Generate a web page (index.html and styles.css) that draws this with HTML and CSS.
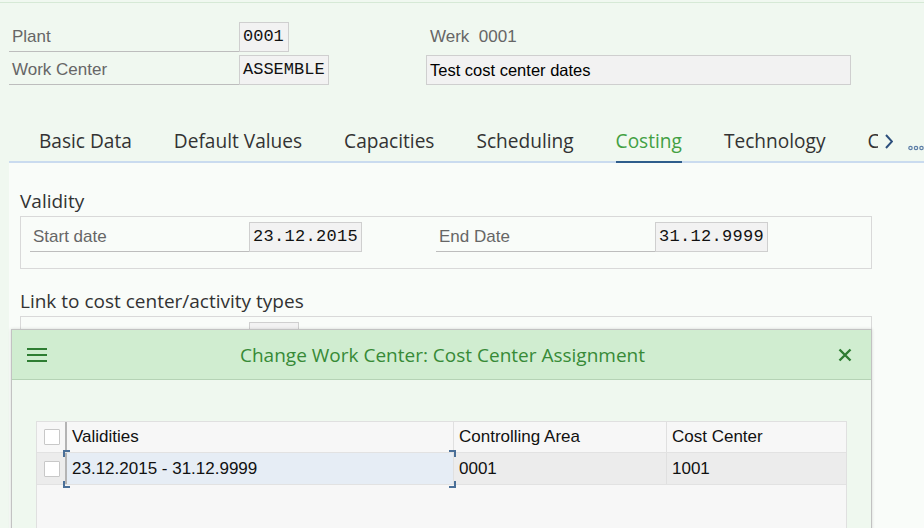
FILE: index.html
```html
<!DOCTYPE html>
<html lang="en">
  <head>
    <meta charset="UTF-8" />
    <title>Change Work Center: Costing</title>
    <link rel="stylesheet" href="styles.css">
  </head>
  <body>
    <div class="page">
      <!-- header fields -->
      <div class="head-grid">
        <div class="lbl">Plant</div>
        <div class="cell"><span class="box mono w-short">0001</span></div>
        <div class="werk">Werk&nbsp;&nbsp;0001</div>

        <div class="lbl">Work Center</div>
        <div class="cell"><span class="box mono">ASSEMBLE</span></div>
        <div class="box desc">Test cost center dates</div>
      </div>

      <!-- tab strip -->
      <div class="tabbar">
        <div class="tabs">
          <span class="tab">Basic Data</span>
          <span class="tab">Default Values</span>
          <span class="tab">Capacities</span>
          <span class="tab">Scheduling</span>
          <span class="tab active">Costing</span>
          <span class="tab">Technology</span>
          <span class="tab">Co</span>
        </div>
        <svg class="tab-arrow" width="8" height="15" viewBox="0 0 8 15">
          <path d="M1 1 L7 7.5 L1 14" fill="none" stroke="#2c4f7c" stroke-width="2" />
        </svg>
        <svg class="tab-more" width="16" height="6" viewBox="0 0 16 6">
          <circle cx="2.5" cy="3" r="1.7" fill="none" stroke="#5d7fa8" stroke-width="1.2" />
          <circle cx="8" cy="3" r="1.7" fill="none" stroke="#5d7fa8" stroke-width="1.2" />
          <circle cx="13.5" cy="3" r="1.7" fill="none" stroke="#5d7fa8" stroke-width="1.2" />
        </svg>
      </div>

      <!-- tab content -->
      <div class="content">
        <h3 class="sec-title">Validity</h3>
        <div class="fbox">
          <div class="frow">
            <div class="flabel">Start date</div>
            <span class="box mono date">23.12.2015</span>
            <div class="flabel gap">End Date</div>
            <span class="box mono date">31.12.9999</span>
          </div>
        </div>

        <h3 class="sec-title second">Link to cost center/activity types</h3>
        <div class="fbox">
          <div class="frow">
            <div class="flabel"></div>
            <span class="box mono w-short"></span>
          </div>
        </div>
      </div>
    </div>

    <!-- popup dialog -->
    <div class="dialog">
      <div class="dlg-head">
        <svg width="20" height="14" viewBox="0 0 20 14">
          <path d="M0 1 H20 M0 7 H20 M0 13 H20" stroke="#2e7d32" stroke-width="2.2" />
        </svg>
        <div class="dlg-title">Change Work Center: Cost Center Assignment</div>
        <svg width="14" height="14" viewBox="0 0 14 14">
          <path d="M1.5 1.5 L12.5 12.5 M12.5 1.5 L1.5 12.5" stroke="#2e7d32" stroke-width="2.4" />
        </svg>
      </div>
      <div class="dlg-body">
        <div class="grid">
          <div class="grow ghead">
            <div class="gcell chk"><span class="checkbox"></span></div>
            <div class="gcell">Validities</div>
            <div class="gcell">Controlling Area</div>
            <div class="gcell last">Cost Center</div>
          </div>
          <div class="grow gdata">
            <div class="gcell chk"><span class="checkbox"></span></div>
            <div class="gcell selected">23.12.2015 - 31.12.9999<span class="sel-frame"></span></div>
            <div class="gcell">0001</div>
            <div class="gcell last">1001</div>
          </div>
        </div>
      </div>
    </div>
  </body>
</html>
```
FILE: styles.css
```css
/* Reset */
* {
  margin: 0;
  padding: 0;
  box-sizing: border-box;
}

body {
  position: relative;
  height: 528px;
  overflow: hidden;
  background-color: #f0f8f0;
  font-family: "Liberation Sans", Arial, sans-serif;
  color: #000;
}

.page {
  display: flex;
  flex-direction: column;
  height: 526px;
  margin-top: 2px;
  border-top: 1px solid #d6e9d6;
}

/* header fields */
.head-grid {
  display: grid;
  grid-template-columns: 230px 187px 425px;
  grid-auto-rows: 30px;
  row-gap: 3px;
  padding: 19px 0 0 9px;
}

.lbl,
.flabel {
  border-bottom: 1px solid #bdbdbd;
  padding-left: 3px;
  font-size: 17px;
  line-height: 29px;
  color: #666;
}

.box {
  display: block;
  height: 30px;
  padding: 0 3px;
  border: 1px solid #cfcfcf;
  background-color: #f2f2f2;
  line-height: 28px;
  white-space: nowrap;
}

.mono {
  font-family: "Liberation Mono", "Courier New", monospace;
  font-size: 17px;
  color: #111;
}

.cell .box {
  display: inline-block;
}

.w-short {
  width: 50px;
}

.werk {
  padding-left: 4px;
  font-size: 17px;
  line-height: 30px;
  color: #666;
}

.desc {
  font-size: 16.5px;
}

/* tab strip */
.tabbar {
  display: flex;
  align-items: flex-start;
  height: 42px;
  margin: 36px 0 0 9px;
  border-bottom: 2px solid #cadbef;
}

.tabs {
  display: flex;
  width: 870px;
  height: 42px;
  padding-left: 9px;
  overflow: hidden;
}

.tab {
  flex-shrink: 0;
  margin: 0 21px;
  height: 42px;
  padding-top: 1px;
  border-bottom: 2px solid transparent;
  font-family: "Open Sans", sans-serif;
  font-size: 19.1px;
  line-height: 39px;
  color: #333;
  white-space: nowrap;
}

.tab.active {
  color: #43a043;
  border-bottom-color: #2f5d8c;
}

.tab-arrow {
  margin: 13px 0 0 7px;
}

.tab-more {
  margin: 24px 0 0 15px;
}

/* tab content */
.content {
  flex: 1;
  margin-left: 9px;
  padding: 27px 0 0 11px;
  background-color: #f9fcf9;
}

.sec-title {
  font-family: "Open Sans", sans-serif;
  font-size: 19px;
  font-weight: 400;
  line-height: 22px;
  color: #333;
  margin-bottom: 4px;
}

.sec-title.second {
  margin-top: 21px;
}

.fbox {
  width: 852px;
  padding: 5px 9px 16px;
  border: 1px solid #d9d9d9;
}

.frow {
  display: flex;
}

.flabel {
  width: 219px;
  height: 30px;
}

.flabel.gap {
  margin-left: 74px;
}

.date {
  width: 113px;
  letter-spacing: 0.3px;
}

/* popup dialog */
.dialog {
  position: absolute;
  top: 329px;
  left: 11px;
  width: 861px;
  height: 215px;
  border: 1px solid #c2c2c2;
  background-color: #eff8ef;
  box-shadow: 0 0 3px rgba(0, 0, 0, 0.15);
  overflow: hidden;
}

.dlg-head {
  display: flex;
  align-items: center;
  height: 50px;
  padding: 0 19px 0 15px;
  background-color: #d0edd0;
  border-bottom: 1px solid #b5d3b5;
}

.dlg-title {
  flex: 1;
  text-align: center;
  font-family: "Open Sans", sans-serif;
  font-size: 19px;
  color: #378a37;
}

.dlg-body {
  padding: 41px 24px 0;
}

.grid {
  height: 160px;
  border: 1px solid #e0e0e0;
  background-color: #f7f7f7;
  font-size: 17px;
  color: #111;
}

.grow {
  display: flex;
  border-bottom: 1px solid #e2e2e2;
}

.ghead {
  height: 31px;
}

.gdata {
  height: 32px;
  background-color: #ececec;
}

.gcell {
  display: flex;
  align-items: center;
  width: 387px;
  padding-left: 5px;
  border-right: 1px solid #e0e0e0;
  white-space: nowrap;
}

.gcell:nth-child(3) {
  width: 213px;
}

.gcell.last {
  flex: 1;
  border-right: none;
}

.gcell.chk {
  width: 30px;
  padding-left: 7px;
  border-right: 2px solid #b4b4b4;
}

.checkbox {
  display: block;
  width: 16px;
  height: 16px;
  border: 1px solid #c8c8c8;
  border-radius: 1px;
  background-color: #fff;
}

.gcell.selected {
  position: relative;
  background-color: #e6edf5;
}

/* corner brackets of the focused cell */
.sel-frame {
  position: absolute;
  top: -3px;
  left: -4px;
  right: -3px;
  bottom: -4px;
  background-image:
    linear-gradient(#4a6f98, #4a6f98), linear-gradient(#4a6f98, #4a6f98),
    linear-gradient(#4a6f98, #4a6f98), linear-gradient(#4a6f98, #4a6f98),
    linear-gradient(#4a6f98, #4a6f98), linear-gradient(#4a6f98, #4a6f98),
    linear-gradient(#4a6f98, #4a6f98), linear-gradient(#4a6f98, #4a6f98);
  background-size: 7px 2px, 2px 7px, 7px 2px, 2px 7px, 7px 2px, 2px 7px, 7px 2px, 2px 7px;
  background-position: left top, left top, right top, right top, left bottom, left bottom, right bottom, right bottom;
  background-repeat: no-repeat;
}
```
